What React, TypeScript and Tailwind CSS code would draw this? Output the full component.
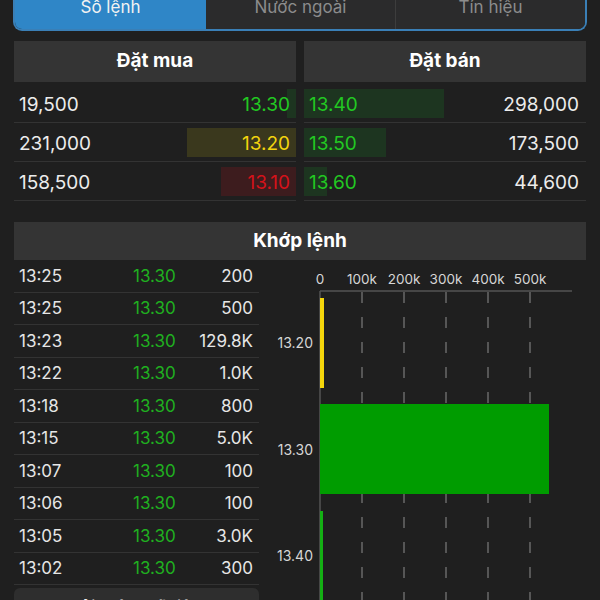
import React from "react";

const buy = [
  { vol: "19,500", price: "13.30", color: "text-[#22c822]", bar: "bg-[#1d3520]", w: 9 },
  { vol: "231,000", price: "13.20", color: "text-[#f2d40e]", bar: "bg-[#3a381d]", w: 109 },
  { vol: "158,500", price: "13.10", color: "text-[#d4121a]", bar: "bg-[#3d1c1e]", w: 75 },
];
const sell = [
  { price: "13.40", vol: "298,000", w: 140 },
  { price: "13.50", vol: "173,500", w: 82 },
  { price: "13.60", vol: "44,600", w: 23 },
];
const trades = [
  ["13:25", "200"],
  ["13:25", "500"],
  ["13:23", "129.8K"],
  ["13:22", "1.0K"],
  ["13:18", "800"],
  ["13:15", "5.0K"],
  ["13:07", "100"],
  ["13:06", "100"],
  ["13:05", "3.0K"],
  ["13:02", "300"],
];

function Chart() {
  const ticks = [
    { x: 61, l: "0" },
    { x: 103, l: "100k" },
    { x: 145, l: "200k" },
    { x: 187, l: "300k" },
    { x: 229, l: "400k" },
    { x: 271, l: "500k" },
  ];
  return (
    <svg width="327" height="340" viewBox="0 0 327 340" className="block">
      {ticks.map((t) => (
        <text
          key={t.l}
          x={t.x}
          y={24}
          textAnchor="middle"
          fontSize="13.5"
          fill="#d6d6d6"
          fontFamily="Inter, sans-serif"
        >
          {t.l}
        </text>
      ))}
      {ticks.slice(1).map((t) => (
        <line key={t.l} x1={t.x} y1={32} x2={t.x} y2={340} stroke="#6a6a6a" strokeWidth="1.5" strokeDasharray="11 14" />
      ))}
      <line x1={61} y1={31} x2={313} y2={31} stroke="#555" strokeWidth="1.5" />
      <line x1={61} y1={31} x2={61} y2={340} stroke="#555" strokeWidth="1.5" />
      <rect x={61} y={38} width={4} height={90} fill="#f5d60b" />
      <rect x={61} y={144} width={229} height={90} fill="#009c00" />
      <rect x={61} y={251} width={3} height={90} fill="#14b014" />
      {[
        { y: 83, l: "13.20" },
        { y: 190, l: "13.30" },
        { y: 296, l: "13.40" },
      ].map((c) => (
        <text
          key={c.l}
          x={54}
          y={c.y + 5}
          textAnchor="end"
          fontSize="14"
          fill="#d6d6d6"
          fontFamily="Inter, sans-serif"
        >
          {c.l}
        </text>
      ))}
    </svg>
  );
}

export default function App() {
  return (
    <div
      className="w-[600px] h-[600px] overflow-hidden bg-[#1f1f1f] px-[13px] text-white"
      style={{ fontFamily: "Inter, 'Noto Sans', sans-serif" }}
    >
      {/* Tabs */}
      <div className="-mt-[13px] h-[44px] flex border-2 border-t-0 border-[#3a7fb6] rounded-b-[9px] overflow-hidden">
        <div className="w-[191px] flex items-center justify-center bg-[#2f86c7] text-[17px] text-[#f2f2f2]">
          Số lệnh
        </div>
        <div className="flex-1 flex items-center justify-center bg-[#2b2b2c] text-[17px] text-[#8c8c8c]">
          Nước ngoài
        </div>
        <div className="flex-1 flex items-center justify-center bg-[#2b2b2c] border-l border-[#3d3d3d] text-[17px] text-[#8c8c8c]">
          Tín hiệu
        </div>
      </div>

      {/* Order book */}
      <div className="mt-[10px] grid grid-cols-2 gap-x-[8px] px-[1px]">
        <div>
          <div className="h-[41px] bg-[#343434] flex items-center justify-center text-[19px] font-bold">
            Đặt mua
          </div>
          <div className="mt-[2px]">
            {buy.map((r) => (
              <div key={r.vol} className="relative h-[39px] border-b border-[#333] flex items-center justify-between pt-[4px] pl-[5px] pr-[6px]">
                <div className={`absolute right-0 top-[5px] bottom-[4px] ${r.bar}`} style={{ width: r.w }} />
                <span className="relative text-[19px] text-[#ececec]">{r.vol}</span>
                <span className={`relative text-[19px] ${r.color}`}>{r.price}</span>
              </div>
            ))}
          </div>
        </div>
        <div>
          <div className="h-[41px] bg-[#343434] flex items-center justify-center text-[19px] font-bold">
            Đặt bán
          </div>
          <div className="mt-[2px]">
            {sell.map((r) => (
              <div key={r.vol} className="relative h-[39px] border-b border-[#333] flex items-center justify-between pt-[4px] pl-[5px] pr-[7px]">
                <div className="absolute left-0 top-[5px] bottom-[4px] bg-[#1d3520]" style={{ width: r.w }} />
                <span className="relative text-[19px] text-[#22c822]">{r.price}</span>
                <span className="relative text-[19px] text-[#ececec]">{r.vol}</span>
              </div>
            ))}
          </div>
        </div>
      </div>

      {/* Matched */}
      <div className="mt-[21px] mx-[1px] h-[38px] bg-[#343434] flex items-center justify-center text-[19px] font-bold">
        Khớp lệnh
      </div>
      <div className="flex mx-[1px]">
        <div className="w-[245px] shrink-0">
          {trades.map(([t, v], i) => (
            <div key={i} className="h-[32.5px] border-b border-[#333] grid grid-cols-[114px_auto_1fr] items-center pt-[1px] pl-[5px] pr-[6px] text-[17px]">
              <span className="text-[#e6e6e6]">{t}</span>
              <span className="text-[#1fb01f]">13.30</span>
              <span className="text-right text-[#e6e6e6]">{v}</span>
            </div>
          ))}
          <div className="mt-[3px] h-[40px] bg-[#2e2e2e] rounded-t-[6px] flex items-center justify-center text-[17px] font-bold text-[#eee]">
            Tải thêm dữ liệu
          </div>
        </div>
        <div className="flex-1">
          <Chart />
        </div>
      </div>
    </div>
  );
}
